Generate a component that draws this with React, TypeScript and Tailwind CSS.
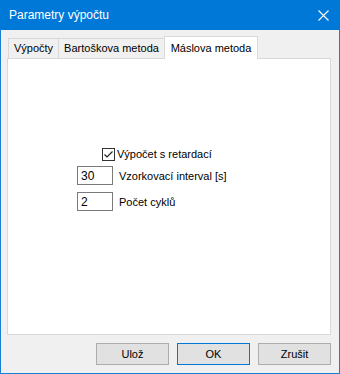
import React from "react";

export default function App() {
  const font = { fontFamily: '"Liberation Sans", Arial, sans-serif' };
  return (
    <div className="w-[340px] h-[374px] flex flex-col bg-[#f0f0f0] text-[11px] text-black" style={font}>
      <div className="h-[31px] bg-[#0078d7] flex items-center justify-between pl-[9px] pr-[11px] text-white">
        <span className="text-[12px]">Parametry výpočtu</span>
        <svg width="11" height="11" viewBox="0 0 11 11">
          <path d="M0.5 0.5 L10.5 10.5 M10.5 0.5 L0.5 10.5" stroke="white" strokeWidth="1.1" />
        </svg>
      </div>
      <div className="flex-1 flex flex-col border-x border-b border-[#1a7fd4] pl-[6px] pr-[8px] pb-[8px]">
        <div className="flex items-end h-[28px] pl-[1px] relative z-10">
          <div className="w-[51px] h-[20px] flex items-center justify-center border border-b-0 border-[#d9d9d9] bg-[#f0f0f0]">Výpočty</div>
          <div className="w-[106px] h-[20px] flex items-center justify-center border border-l-0 border-b-0 border-[#d9d9d9] bg-[#f0f0f0]">Bartoškova metoda</div>
          <div className="w-[94px] h-[23px] -mb-[1px] -ml-[1px] flex items-center justify-center border border-b-0 border-[#d9d9d9] bg-white">Máslova metoda</div>
        </div>
        <div className="h-[277px] bg-white border border-[#d9d9d9] flex flex-col pt-[88px]">
          <div className="flex items-center ml-[94px] h-[14px]">
            <div className="w-[13px] h-[13px] border border-[#333] bg-white flex items-center justify-center">
              <svg width="11" height="11" viewBox="0 0 11 11">
                <path d="M1.5 5.5 L4 8 L9.5 2.5" stroke="#222" strokeWidth="1.2" fill="none" />
              </svg>
            </div>
            <span className="ml-[2px]">Výpočet s retardací</span>
          </div>
          <div className="flex items-center ml-[69px] mt-[5px]">
            <div className="w-[36px] h-[19px] border border-[#7a7a7a] bg-white pl-[3px] flex items-center leading-none text-[12px]">30</div>
            <span className="ml-[6px] mt-[2px]">Vzorkovací interval [s]</span>
          </div>
          <div className="flex items-center ml-[69px] mt-[7px]">
            <div className="w-[36px] h-[19px] border border-[#7a7a7a] bg-white pl-[3px] flex items-center leading-none text-[12px]">2</div>
            <span className="ml-[6px] mt-[2px]">Počet cyklů</span>
          </div>
        </div>
        <div className="flex justify-end gap-[8px] mt-[8px]">
          <button className="w-[73px] h-[22px] bg-[#e1e1e1] border border-[#adadad] flex items-center justify-center">Ulož</button>
          <button className="w-[73px] h-[22px] bg-[#e1e1e1] border border-[#0078d7] flex items-center justify-center">OK</button>
          <button className="w-[73px] h-[22px] bg-[#e1e1e1] border border-[#adadad] flex items-center justify-center">Zrušit</button>
        </div>
      </div>
    </div>
  );
}
